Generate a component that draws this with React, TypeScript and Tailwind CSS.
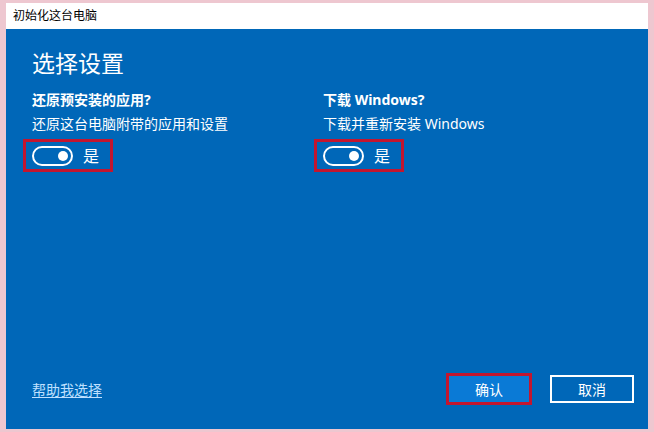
import {useState} from "react";

interface ToggleProps {
    on: boolean
    onChange: () => void
}

const Toggle = ({on, onChange}: ToggleProps) => {
    return (
        <div className="-ml-[9px] mt-[5px] flex h-[33px] w-[90px] items-center border-[3px] border-[#c3162f] pl-[6px]">
            <button
                onClick={onChange}
                className="flex h-[20px] w-[41px] items-center rounded-full border-2 border-white px-[3px]">
                <span className={`h-[10px] w-[10px] rounded-full bg-white ${on ? "ml-auto" : ""}`}/>
            </button>
            <span className="ml-[10px] text-[16px] leading-none text-white">{on ? "是" : "否"}</span>
        </div>
    )
}

const App = () => {
    const [apps, setApps] = useState(true)
    const [download, setDownload] = useState(true)

    return (
        <div
            className="flex h-[432px] w-[654px] bg-[#eec7d0] px-[6px] pt-[3px] pb-[3px]"
            style={{fontFamily: '"Noto Sans", "Noto Sans CJK SC", sans-serif'}}>
            <div className="flex flex-1 flex-col overflow-hidden">
                <div className="flex h-[26px] items-center bg-white pl-[7px] text-[12px] text-black">
                    初始化这台电脑
                </div>
                <div className="flex flex-1 flex-col bg-[#0067b8] pl-[26px] pr-[14px] pt-[18px] pb-[24px] text-white">
                    <h1 className="text-[23px] leading-[32px]">选择设置</h1>
                    <div className="mt-[10px] grid grid-cols-[291px_1fr]">
                        <div>
                            <div className="text-[14px] font-bold leading-[22px]">还原预安装的应用?</div>
                            <div className="mt-[3px] text-[14px] leading-[20px]">还原这台电脑附带的应用和设置</div>
                            <Toggle on={apps} onChange={() => setApps(!apps)}/>
                        </div>
                        <div>
                            <div className="text-[14px] font-bold leading-[22px]">下载 Windows?</div>
                            <div className="mt-[3px] text-[14px] leading-[20px]">下载并重新安装 Windows</div>
                            <Toggle on={download} onChange={() => setDownload(!download)}/>
                        </div>
                    </div>
                    <div className="mt-auto flex items-center">
                        <a href="#" className="text-[14px] text-[#bfe0ff] underline underline-offset-2">帮助我选择</a>
                        <div className="ml-auto flex h-[32px] w-[86px] items-center justify-center border-[3px] border-[#c3162f]">
                            <button className="h-[26px] w-[80px] bg-[#0a7ad6] text-[14px] text-white">确认</button>
                        </div>
                        <button
                            className="ml-[18px] h-[28px] w-[84px] border-2 border-white text-[14px] text-white">
                            取消
                        </button>
                    </div>
                </div>
            </div>
        </div>
    )
}

export default App
